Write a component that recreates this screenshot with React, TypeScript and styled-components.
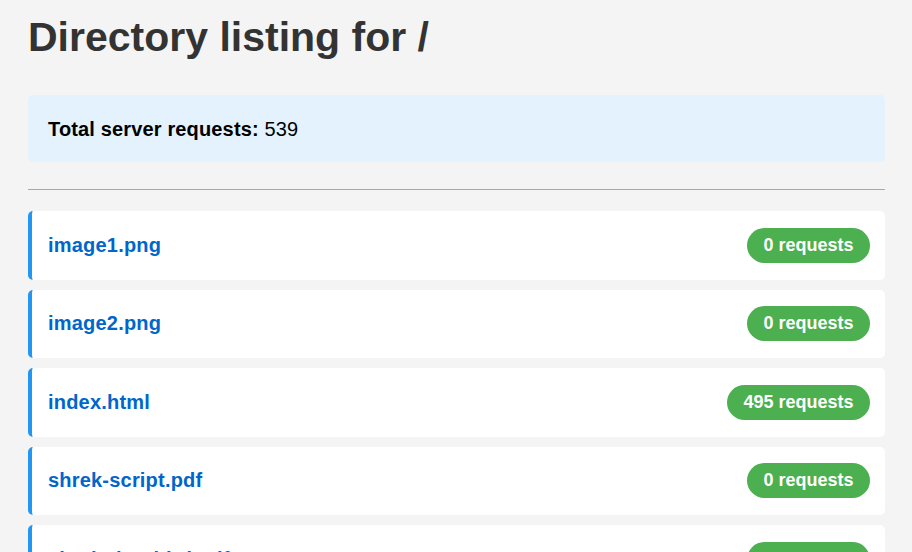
import React from "react";
import styled, { createGlobalStyle } from "styled-components";

const GlobalStyle = createGlobalStyle`
  html, body {
    margin: 0;
    padding: 0;
    overflow: hidden;
    background: #f4f4f4;
    font-family: "Liberation Sans", Arial, Helvetica, sans-serif;
  }
`;

const Page = styled.div`
  padding: 14px 27px 40px 28px;
`;

const Title = styled.h1`
  margin: 0 0 35px;
  font-size: 41px;
  font-weight: 700;
  color: #333333;
  line-height: 46px;
`;

const InfoBox = styled.div`
  background: #e3f2fd;
  border-radius: 5px;
  padding: 23px 20px 21px;
  font-size: 20px;
  line-height: 23px;
  letter-spacing: 0.15px;
  color: #000000;
`;

const Divider = styled.div`
  border-top: 1px solid #a8a8a8;
  margin: 27px 0 21px;
`;

const List = styled.ul`
  list-style: none;
  margin: 0;
  padding: 0;
  display: flex;
  flex-direction: column;
  gap: 10px;
`;

const Row = styled.li`
  display: flex;
  align-items: center;
  justify-content: space-between;
  height: 68.5px;
  box-sizing: border-box;
  padding: 0 15px 0 16px;
  background: #ffffff;
  border-left: 4px solid #2196f3;
  border-radius: 5px;
`;

const FileLink = styled.a`
  font-size: 20px;
  font-weight: 700;
  letter-spacing: 0.2px;
  color: #0066cc;
  text-decoration: none;
`;

const Badge = styled.span`
  display: inline-flex;
  align-items: center;
  height: 35px;
  padding: 0 16.5px;
  border-radius: 18px;
  background: #4caf50;
  color: #ffffff;
  font-size: 18px;
  font-weight: 700;
  white-space: nowrap;
`;

const files = [
  { name: "image1.png", count: 0 },
  { name: "image2.png", count: 0 },
  { name: "index.html", count: 495 },
  { name: "shrek-script.pdf", count: 0 },
  { name: "shrek-the-third.pdf", count: 0 },
  { name: "style.css", count: 0 },
];

export default function App() {
  return (
    <>
      <GlobalStyle />
      <Page>
        <Title>Directory listing for /</Title>
        <InfoBox>
          <strong>Total server requests:</strong> 539
        </InfoBox>
        <Divider />
        <List>
          {files.map((f) => (
            <Row key={f.name}>
              <FileLink href={"/" + f.name}>{f.name}</FileLink>
              <Badge>{f.count} requests</Badge>
            </Row>
          ))}
        </List>
      </Page>
    </>
  );
}
